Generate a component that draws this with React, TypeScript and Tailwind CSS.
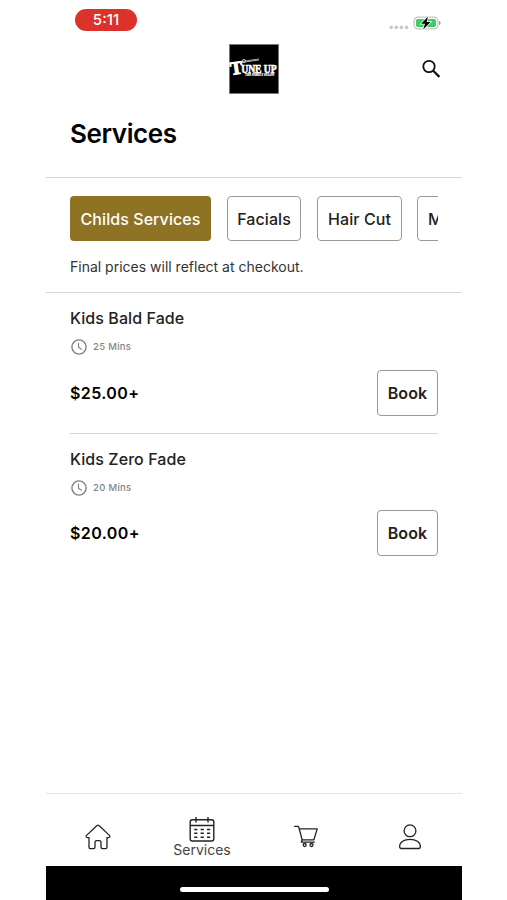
import React from "react";

type Service = { name: string; duration: string; price: string };

const services: Service[] = [
  { name: "Kids Bald Fade", duration: "25 Mins", price: "$25.00+" },
  { name: "Kids Zero Fade", duration: "20 Mins", price: "$20.00+" },
];

function Logo() {
  return (
    <svg width="50" height="50" viewBox="0 0 50 50" className="block">
      <rect x="0.5" y="0.5" width="49" height="49" fill="#000" stroke="#777" strokeWidth="0.8" />
      <g fill="#fff" fontFamily="'Liberation Serif', serif" fontWeight="700">
        <text x="1.200" y="30" fontSize="18.5" stroke="#fff" strokeWidth="1" transform="rotate(-8 8 24)">T</text>
        <text x="12.200" y="28.600" fontSize="11.500" stroke="#fff" strokeWidth="0.600" textLength="35.500" lengthAdjust="spacingAndGlyphs">UNE UP</text>
        <text x="16" y="32" fontSize="3.600" stroke="#fff" strokeWidth="0.200" textLength="29" lengthAdjust="spacingAndGlyphs">THE FAMILY SALON</text>
      </g>
      <path d="M13 17.400 30 15M13 18.400 30 16" stroke="#bbb" strokeWidth="0.900" />
      <circle cx="15" cy="17" r="1.600" fill="none" stroke="#ddd" strokeWidth="0.800" />
    </svg>
  );
}

function StatusIcons() {
  return (
    <svg width="54" height="16" viewBox="0 0 54 16" className="block">
      <g fill="#c8c8c8">
        <circle cx="4.200" cy="12.400" r="1.800" />
        <circle cx="9.300" cy="12.400" r="1.800" />
        <circle cx="14.400" cy="12.400" r="1.800" />
        <circle cx="19.500" cy="12.400" r="1.800" />
      </g>
      <rect x="27.100" y="2.100" width="23.800" height="11.800" rx="3.800" fill="#fff" stroke="#c3c3c3" strokeWidth="1.200" />
      <rect x="29" y="4" width="20" height="8" rx="1.800" fill="#3fcb63" />
      <path d="M52 6v4c1.100-.4 1.600-1.100 1.600-2S53.100 6.400 52 6Z" fill="#9a9a9a" />
      <path d="M41 1.500 34.200 8.800h3.800L36.200 14.500 43.600 7h-3.900L41 1.500Z" fill="#000" stroke="#fff" strokeWidth="1.400" paintOrder="stroke" />
    </svg>
  );
}

function SearchIcon() {
  return (
    <svg width="20" height="20" viewBox="0 0 20 20" fill="none" stroke="#111" className="block">
      <circle cx="8" cy="7.500" r="5.700" strokeWidth="1.800" />
      <path d="m12.200 11.700 6.200 6.200" strokeWidth="2.200" />
    </svg>
  );
}

function ClockIcon() {
  return (
    <svg width="16" height="16" viewBox="0 0 16 16" fill="none" stroke="#808080" className="block">
      <circle cx="8" cy="8" r="7.100" strokeWidth="1.400" />
      <path d="M7.500 3.800v4.400l3.200 2.300" strokeWidth="1.100" />
    </svg>
  );
}

function HomeIcon() {
  return (
    <svg width="26" height="26" viewBox="0 0 26 26" fill="none" stroke="#222" strokeWidth="1.300" strokeLinejoin="round" className="block">
      <path d="M12 1.500q1-.8 2 0l10.400 9.900q.9.900.2 1.700-.5.500-1.400.5H22v9.500q0 1.600-1.600 1.600h-2.800q-1.600 0-1.600-1.600v-4.300q0-2.100-1.600-2.100h-2.800q-1.600 0-1.600 2.100v4.300q0 1.600-1.600 1.600H5.600Q4 24.700 4 23.100v-9.500H2.800q-.9 0-1.400-.5-.7-.8.200-1.700L12 1.500Z" />
    </svg>
  );
}

function CalendarIcon() {
  return (
    <svg width="26" height="26" viewBox="0 0 26 26" fill="none" stroke="#222" strokeWidth="1.400" className="block">
      <rect x="1.200" y="2.800" width="23.600" height="21.200" rx="2.200" />
      <path d="M1.200 8.500h23.600M7 0v5.500M19 0v5.500" />
      <g strokeWidth="1.600" strokeDasharray="3.200 3.200">
        <path d="M5.200 12.500h16M5.200 16.300h16M5.200 20.200h16" />
      </g>
    </svg>
  );
}

function CartIcon() {
  return (
    <svg width="26" height="24" viewBox="0 0 26 24" fill="none" stroke="#222" strokeWidth="1.300" strokeLinejoin="round" strokeLinecap="round" className="block">
      <path d="M1.500 1.300h3.300q.7 0 .9.700L9.200 14.800h11.700l3.300-10.900H6.500" />
      <path d="m9.200 14.800-.9 2.400h13" />
      <circle cx="11.700" cy="20" r="1.500" />
      <circle cx="18.500" cy="20" r="1.500" />
    </svg>
  );
}

function PersonIcon() {
  return (
    <svg width="24" height="26" viewBox="0 0 24 26" fill="none" stroke="#222" strokeWidth="1.300" className="block">
      <circle cx="12" cy="6.800" r="5.900" />
      <path d="M1.600 22.600C1.600 18.100 6.200 15.300 12 15.300s10.400 2.800 10.400 7.300q0 1.900-1.800 1.900H3.400q-1.800 0-1.800-1.900Z" />
    </svg>
  );
}

function ServiceRow({ service }: { service: Service }) {
  return (
    <section className="flex h-[139.500px] shrink-0 flex-col pt-[15px]">
      <h2 className="h-5 whitespace-nowrap text-[16px] leading-5 font-medium tracking-[0.070px] text-[#222]">{service.name}</h2>
      <div className="mt-[11px] flex h-4 items-center gap-1.5 text-[#858585]">
        <span className="ml-px"><ClockIcon /></span>
        <span className="text-[9.500px] leading-4 font-medium tracking-[0.300px]">{service.duration}</span>
      </div>
      <div className="mt-[14.500px] flex items-center justify-between">
        <span className="text-[16px] font-semibold tracking-[0.400px] text-black">{service.price}</span>
        <button className="h-[46px] w-[61px] rounded-[4px] border border-[#999] text-[16px] font-semibold tracking-[0.100px] text-[#222]">Book</button>
      </div>
    </section>
  );
}

export default function App() {
  return (
    <div className="h-[900px] w-[507px] overflow-hidden bg-white font-['Inter','Liberation_Sans',sans-serif]">
      <main className="ml-[46px] flex h-full w-[416px] flex-col">
        <div className="flex h-[37px] shrink-0 items-start justify-between pr-[21px] pl-[29px]">
          <div className="mt-[9px] flex h-[22px] w-[62px] items-center justify-center rounded-full bg-[#dc322c] text-[15px] font-medium text-white">5:11</div>
          <div className="mt-[15px]"><StatusIcons /></div>
        </div>
        <header className="grid h-[69px] shrink-0 grid-cols-[1fr_50px_1fr] pt-[7px]">
          <div />
          <Logo />
          <div className="ml-auto pt-[15px] pr-[21px]"><SearchIcon /></div>
        </header>
        <div className="h-[72px] shrink-0 border-b border-[#d6d6d6] px-6 pt-3">
          <h1 className="text-[26px] leading-8 font-semibold tracking-[-0.400px] text-black">Services</h1>
        </div>
        <div className="h-[115px] shrink-0 border-b border-[#d6d6d6] px-6 pt-[18px]">
          <div className="flex h-[45px] gap-4 overflow-hidden text-[16px] font-medium tracking-[0.070px] text-[#222]">
            <button className="w-[141px] shrink-0 rounded-[4px] bg-[#8f7324] text-white">Childs Services</button>
            <button className="w-[74px] shrink-0 rounded-[4px] border border-[#999]">Facials</button>
            <button className="w-[85px] shrink-0 rounded-[4px] border border-[#999]">Hair Cut</button>
            <button className="-ml-px w-[80px] shrink-0 rounded-[4px] border border-[#999] pl-[10px] text-left">Massage</button>
          </div>
          <p className="mt-4 text-[14px] leading-5 text-[#333]">Final prices will reflect at checkout.</p>
        </div>
        <div className="flex flex-1 flex-col px-6">
          <ServiceRow service={services[0]} />
          <div className="h-px shrink-0 bg-[#d6d6d6]" />
          <ServiceRow service={services[1]} />
        </div>
        <nav className="grid h-[73px] shrink-0 grid-cols-4 border-t border-[#e5e5e5] text-[#444]">
          <div className="flex justify-center pt-[30px]"><HomeIcon /></div>
          <div className="flex flex-col items-center pt-[23px]">
            <CalendarIcon />
            <span className="text-[14px] leading-[14px]">Services</span>
          </div>
          <div className="flex justify-center pt-[31px]"><CartIcon /></div>
          <div className="flex justify-center pt-[30px]"><PersonIcon /></div>
        </nav>
        <div className="flex h-[34px] shrink-0 justify-center bg-black pt-[21px]">
          <div className="h-[5px] w-[149px] rounded-full bg-white" />
        </div>
      </main>
    </div>
  );
}
